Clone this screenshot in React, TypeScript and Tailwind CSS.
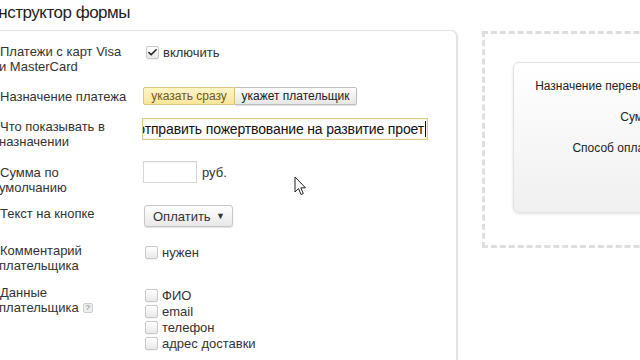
import { Check } from "lucide-react";

function Box({ checked = false }: { checked?: boolean }) {
  return (
    <span className="flex h-[13px] w-[13px] shrink-0 items-center justify-center rounded-[2px] border border-[#c9c9c9] bg-gradient-to-b from-white to-[#e9e9e9] shadow-[0_1px_0_rgba(0,0,0,0.05)]">
      {checked && <Check className="h-[11px] w-[11px] text-[#222]" strokeWidth={3.5} />}
    </span>
  );
}

function CheckItem({ label, checked = false }: { label: string; checked?: boolean }) {
  return (
    <div className="flex h-[16px] items-center gap-[4px]">
      <Box checked={checked} />
      <span className="text-[13px] leading-[15px] text-[#333]">{label}</span>
    </div>
  );
}

function Cursor() {
  return (
    <svg className="absolute left-[294px] top-[176px]" width="13" height="20" viewBox="0 0 13 20">
      <path d="M1 1 L1 16 L4.5 12.5 L7 18.5 L9.3 17.5 L6.8 11.8 L11.5 11.8 Z" fill="#fff" stroke="#222" strokeWidth="1" strokeLinejoin="round" />
    </svg>
  );
}

export default function App() {
  const payerFields = ["ФИО", "email", "телефон", "адрес доставки"];

  return (
    <div className="relative flex h-[360px] w-[640px] overflow-hidden bg-white font-['Liberation_Sans',Arial,sans-serif] text-[#333]">
      {/* left: form builder */}
      <div className="flex w-[458px] shrink-0 flex-col">
        <div className="h-[30px] shrink-0 pt-[2px]">
          <h1 className="-ml-[20px] whitespace-nowrap text-[17px] leading-[22px] tracking-[-0.5px] text-[#222]">
            Конструктор формы
          </h1>
        </div>
        <div className="flex flex-1 flex-col rounded-tr-[7px] border-r-2 border-t border-[#e4e4e4] pt-[13px] text-[13px] leading-[15px] shadow-[1px_0_2px_rgba(0,0,0,0.04)]">
          {/* row 1 */}
          <div className="flex h-[43px]">
            <div className="w-[146px] shrink-0">
              Платежи с карт Visa
              <br />
              <span className="-ml-[1px]">и MasterCard</span>
            </div>
            <div className="flex h-[15px] items-center gap-[4px] pt-[1px]">
              <Box checked />
              <span>включить</span>
            </div>
          </div>

          {/* row 2 */}
          <div className="flex h-[31px]">
            <div className="w-[143px] shrink-0 pt-[2px]">Назначение платежа</div>
            <div className="flex h-[18px] text-[12px]">
              <div className="flex w-[92px] items-center justify-center rounded-l-[2px] border border-[#d9c57e] bg-gradient-to-b from-[#fff6c8] to-[#fbe59a] text-[#6b5c22]">
                указать сразу
              </div>
              <div className="flex w-[122px] items-center justify-center rounded-r-[2px] border border-l-0 border-[#bdbdbd] bg-gradient-to-b from-white to-[#e6e6e6] text-[#222] shadow-[0_1px_1px_rgba(0,0,0,0.12)]">
                укажет плательщик
              </div>
            </div>
          </div>

          {/* row 3 */}
          <div className="flex h-[43px]">
            <div className="w-[142px] shrink-0 pt-[1px]">
              Что показывать в
              <br />
              <span className="-ml-[1px]">назначении</span>
            </div>
            <div className="flex h-[22px] w-[286px] items-center justify-end overflow-hidden border border-[#dccb86] bg-white pr-[1px] shadow-[inset_0_0_2px_rgba(230,200,90,0.6)]">
              <span className="whitespace-nowrap text-[14px] leading-[18px] tracking-[-0.15px] text-[#111]">
                отправить пожертвование на развитие проет
              </span>
              <span className="ml-[1px] h-[16px] w-[1px] shrink-0 bg-[#111]" />
            </div>
          </div>

          {/* row 4 */}
          <div className="flex h-[44px]">
            <div className="w-[143px] shrink-0 pt-[4px]">
              Сумма по
              <br />
              <span className="-ml-[1px]">умолчанию</span>
            </div>
            <div className="h-[22px] w-[54px] border border-[#d6d6d6] bg-white shadow-[inset_0_1px_1px_rgba(0,0,0,0.06)]" />
            <span className="ml-[5px] pt-[4px]">руб.</span>
          </div>

          {/* row 5 */}
          <div className="flex h-[38px]">
            <div className="w-[144px] shrink-0 pt-[1px]">Текст на кнопке</div>
            <div className="flex h-[22px] w-[89px] items-center justify-between rounded-[3px] border border-[#c6c6c6] bg-gradient-to-b from-white to-[#e8e8e8] pl-[8px] pr-[7px] text-[13px] text-[#333] shadow-[0_1px_1px_rgba(0,0,0,0.12)]">
              <span>Оплатить</span>
              <span className="text-[9px]">▼</span>
            </div>
          </div>

          {/* row 6 */}
          <div className="flex h-[42px]">
            <div className="w-[145px] shrink-0">
              Комментарий
              <br />
              <span className="-ml-[1px]">плательщика</span>
            </div>
            <div className="pt-[1px]">
              <CheckItem label="нужен" />
            </div>
          </div>

          {/* row 7 */}
          <div className="flex">
            <div className="w-[145px] shrink-0">
              Данные
              <br />
              <span className="-ml-[1px] inline-flex items-center gap-[4px]">
                плательщика
                <span className="flex h-[10px] w-[10px] items-center justify-center rounded-[2px] border border-[#cfcfcf] bg-[#eee] text-[8px] leading-none text-[#777]">
                  ?
                </span>
              </span>
            </div>
            <div className="flex flex-col pt-[2px]">
              {payerFields.map((f) => (
                <CheckItem key={f} label={f} />
              ))}
            </div>
          </div>
        </div>
      </div>

      {/* right: preview */}
      <div className="flex-1 pl-[24px] pt-[31px]">
        <div className="h-[217px] w-[300px] border-[3px] border-dashed border-[#dedede] pl-[28px] pt-[28px]">
          <div className="h-[151px] w-[260px] rounded-[6px] border border-[#e2e2e2] bg-gradient-to-b from-white to-[#f0f0f0] pt-[16px] text-[12px] leading-[15px] text-[#222] shadow-[0_1px_3px_rgba(0,0,0,0.12)]">
            <div className="flex w-[144px] flex-col items-end gap-[16px] whitespace-nowrap">
              <div>Назначение перевода</div>
              <div>Сумма</div>
              <div>Способ оплаты</div>
            </div>
          </div>
        </div>
      </div>

      <Cursor />
    </div>
  );
}
